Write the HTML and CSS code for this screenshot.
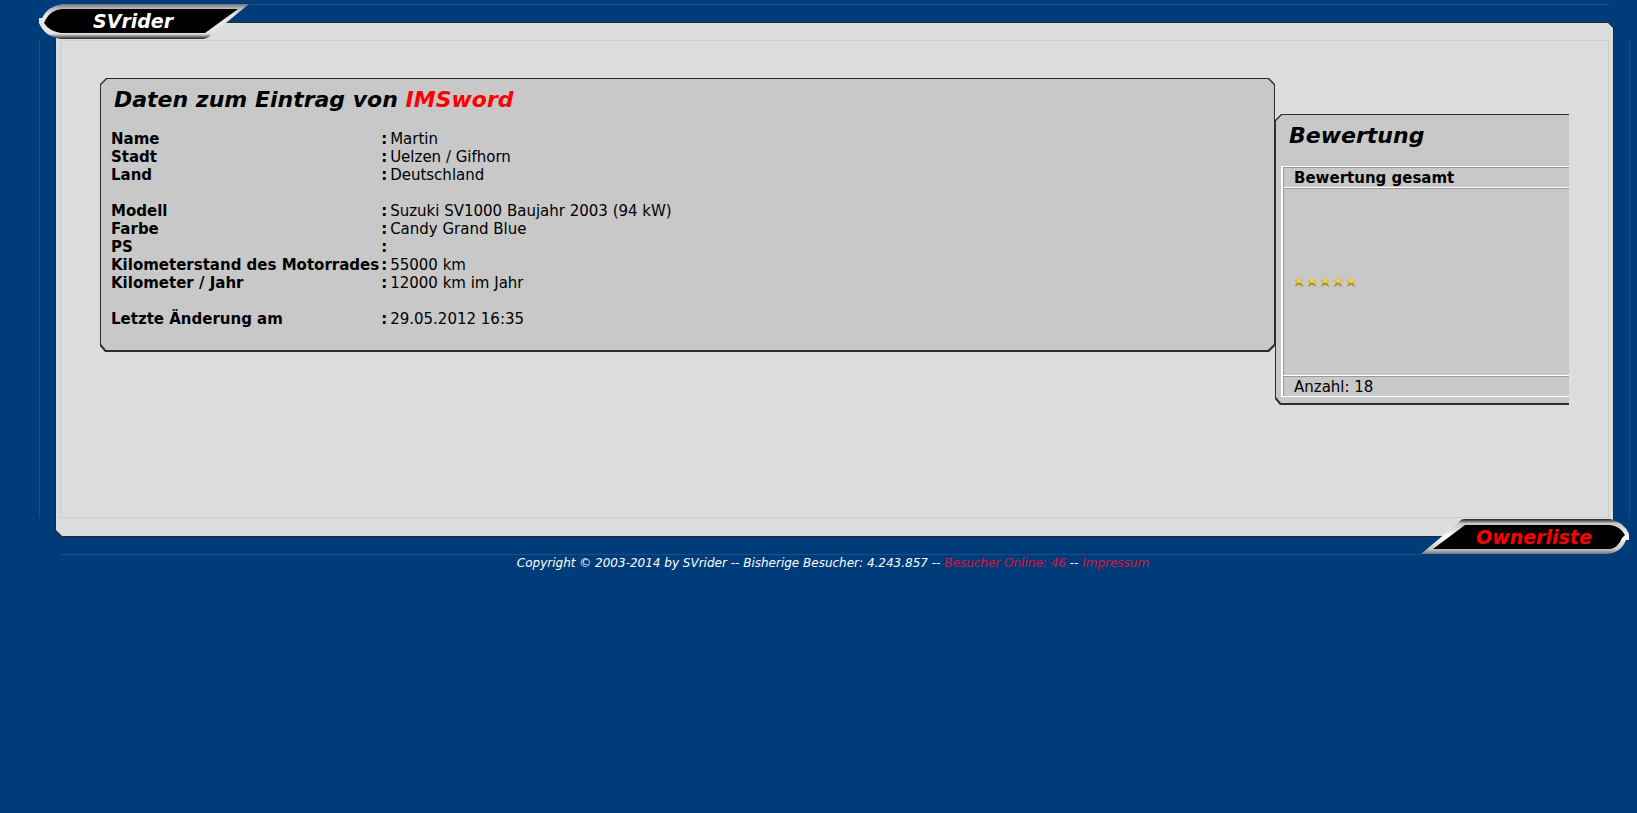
FILE: index.html
```html
<!DOCTYPE html>
<html lang="de">
<head>
<meta charset="UTF-8">
<meta name="viewport" content="width=device-width, initial-scale=1.0">
<title>SVrider - Ownerliste</title>
<link rel="stylesheet" href="styles.css">
</head>
<body>

<div class="page">
    <!-- feine Linien im blauen Rand -->
    <div class="line line-top"></div>
    <div class="line line-left"></div>
    <div class="line line-right"></div>
    <div class="line line-bottom"></div>

    <div class="frame">
        <div class="panel">
            <div class="inner">
                <div class="card entry">
                    <div class="card-body">
                        <h1>Daten zum Eintrag von <span class="user">IMSword</span></h1>
                        <table class="data">
                            <tr><th scope="row">Name</th><td class="colon">:</td><td>Martin</td></tr>
                            <tr><th scope="row">Stadt</th><td class="colon">:</td><td>Uelzen / Gifhorn</td></tr>
                            <tr><th scope="row">Land</th><td class="colon">:</td><td>Deutschland</td></tr>
                            <tr class="gap"><td colspan="3"></td></tr>
                            <tr><th scope="row">Modell</th><td class="colon">:</td><td>Suzuki SV1000 Baujahr 2003 (94 kW)</td></tr>
                            <tr><th scope="row">Farbe</th><td class="colon">:</td><td>Candy Grand Blue</td></tr>
                            <tr><th scope="row">PS</th><td class="colon">:</td><td></td></tr>
                            <tr><th scope="row">Kilometerstand des Motorrades</th><td class="colon">:</td><td>55000 km</td></tr>
                            <tr><th scope="row">Kilometer / Jahr</th><td class="colon">:</td><td>12000 km im Jahr</td></tr>
                            <tr class="gap"><td colspan="3"></td></tr>
                            <tr><th scope="row">Letzte Änderung am</th><td class="colon">:</td><td>29.05.2012 16:35</td></tr>
                        </table>
                    </div>
                </div>

                <div class="card rating">
                    <div class="card-body">
                        <h1>Bewertung</h1>
                        <table class="votes">
                            <tr><th scope="col">Bewertung gesamt</th></tr>
                            <tr>
                                <td class="stars">
                                    <svg width="64" height="12" viewBox="0 0 64 12" role="img" aria-label="5 Sterne">
                                        <defs>
                                            <g id="star">
                                                <path d="M4 0 L5.8 3.6 L9.8 4 L7 6.6 L9.4 11 L5 8.4 L0.6 11 L3 6.8 L0.2 4.4 L3.4 4 Z" fill="#dcb92c"/>
                                                <path d="M3 6.8 L0.6 11 L5 8.4 L9.4 11 L7.2 7 L5 7.2 Z" fill="#a98d33"/>
                                                <path d="M4.2 1.4 L5.4 4.4 L8.6 4.6 L5.4 6.4 L3.2 5 Z" fill="#f3da62"/>
                                            </g>
                                        </defs>
                                        <use href="#star" x="0"/>
                                        <use href="#star" x="13"/>
                                        <use href="#star" x="26"/>
                                        <use href="#star" x="39"/>
                                        <use href="#star" x="52"/>
                                    </svg>
                                </td>
                            </tr>
                            <tr><td>Anzahl: 18</td></tr>
                        </table>
                    </div>
                </div>
            </div>
        </div>
    </div>

    <div class="badge badge-top">
        <svg width="212" height="36" viewBox="0 0 212 36" aria-hidden="true">
            <defs>
                <linearGradient id="chrome" x1="0" y1="0" x2="0" y2="1">
                    <stop offset="0" stop-color="#6f747a"/>
                    <stop offset="0.12" stop-color="#b4b6b9"/>
                    <stop offset="0.3" stop-color="#e6e6e6"/>
                    <stop offset="0.85" stop-color="#e4e4e4"/>
                    <stop offset="0.92" stop-color="#8a8a8a"/>
                    <stop offset="1" stop-color="#222222"/>
                </linearGradient>
            </defs>
            <path d="M24 0 H211 L172 32 Q169 35 165 35 H23 Q7 33 1 19 V14 H4 Q10 2 24 0 Z" fill="url(#chrome)"/>
            <path d="M24 5 H200 L167 29 H23 Q11 27 6 19 L8 15 Q13 6 24 5 Z" fill="#000"/>
        </svg>
        <span class="badge-text">SVrider</span>
    </div>

    <div class="badge badge-bottom">
        <svg width="212" height="36" viewBox="0 0 212 36" aria-hidden="true">
            <defs>
                <linearGradient id="chrome2" x1="0" y1="0" x2="0" y2="1">
                    <stop offset="0" stop-color="#222222"/>
                    <stop offset="0.07" stop-color="#777777"/>
                    <stop offset="0.12" stop-color="#c4c4c4"/>
                    <stop offset="0.5" stop-color="#ffffff"/>
                    <stop offset="0.85" stop-color="#c9c9c9"/>
                    <stop offset="1" stop-color="#777c82"/>
                </linearGradient>
            </defs>
            <path d="M43 0 H189 Q203 3 208 15 V21 H205 Q200 34 186 35 H0 L38 3 Q40 0 43 0 Z" fill="url(#chrome2)"/>
            <path d="M44 6 H189 Q199 7 204 16 L201 19 Q197 29 189 30 H12 Z" fill="#000"/>
        </svg>
        <span class="badge-text">Ownerliste</span>
    </div>
</div>

<p class="footer">Copyright © 2003-2014 by SVrider -- Bisherige Besucher: 4.243.857 -- <a href="#">Besucher Online: 46</a> -- <a href="#">Impressum</a></p>

</body>
</html>
```

FILE: styles.css
```css
body {
    margin: 0;
    background-color: #003c7a;
    color: #000;
    font-family: Verdana, "DejaVu Sans", sans-serif;
    font-size: 15px;
    line-height: 18px;
}

.page {
    position: relative;
    padding: 22px 23px 18px 55px;
}

.frame {
    background-color: #252a30;
    padding: 1px;
    clip-path: polygon(0 0, calc(100% - 5px) 0, 100% 5px, 100% 100%, 6px 100%, 0 calc(100% - 6px));
}

.panel {
    background-color: #dcddde;
    padding: 17px 4px 18px;
    clip-path: polygon(0 0, calc(100% - 5px) 0, 100% 5px, 100% 100%, 6px 100%, 0 calc(100% - 6px));
}

.inner {
    display: flex;
    align-items: flex-start;
    min-height: 478px;
    box-sizing: border-box;
    padding: 37px 39px 0;
    border: 1px solid #c8d0d3;
}

.card {
    box-sizing: border-box;
    background-color: #2b2d2f;
    padding: 1px 1px 2px;
    clip-path: polygon(6px 0, calc(100% - 6px) 0, 100% 6px, 100% calc(100% - 6px), calc(100% - 6px) 100%, 5px 100%, 0 calc(100% - 6px), 0 6px);
}

.card-body {
    box-sizing: border-box;
    background-color: #c8c8c8;
    clip-path: polygon(6px 0, calc(100% - 6px) 0, 100% 6px, 100% calc(100% - 6px), calc(100% - 6px) 100%, 5px 100%, 0 calc(100% - 6px), 0 6px);
}

.entry {
    flex: 1;
}

.entry .card-body {
    padding: 8px 10px 22px;
}

/* rechts offen */
.rating,
.rating .card-body {
    clip-path: polygon(6px 0, 100% 0, 100% 100%, 5px 100%, 0 calc(100% - 6px), 0 6px);
}

.rating {
    width: 294px;
    margin-top: 36px;
    padding-right: 0;
}

.rating .card-body {
    padding: 8px 0 6px 5px;
}

h1 {
    margin: 0 0 17px 3px;
    font-size: 22px;
    line-height: 26px;
    font-style: italic;
}

.rating h1 {
    margin-left: 8px;
}

.user {
    color: #f00;
}

table {
    border-collapse: collapse;
}

.data th,
.data td {
    padding: 0;
    height: 18px;
    text-align: left;
}

.data .colon {
    padding: 0 3px 0 2px;
    font-weight: bold;
}

.votes {
    width: 100%;
    border-spacing: 0;
    border-collapse: separate;
    border-left: 2px solid #fff;
    border-bottom: 1px solid #fff;
}

.votes th,
.votes td {
    padding: 3px 0 0 11px;
    line-height: 17px;
    text-align: left;
    border-top: 1px solid #fff;
    box-shadow: inset 1px 1px 0 #999;
}

.votes .stars {
    height: 187px;
    padding-top: 0;
}

.stars svg {
    display: block;
}

.line {
    position: absolute;
    background-color: #17508a;
}

.line-top {
    top: 4px;
    left: 250px;
    right: 28px;
    height: 1px;
}

.line-left {
    top: 40px;
    bottom: 37px;
    left: 39px;
    width: 1px;
}

.line-right {
    top: 40px;
    bottom: 37px;
    right: 7px;
    width: 1px;
}

.line-bottom {
    bottom: 0;
    left: 60px;
    right: 216px;
    height: 1px;
}

.badge {
    position: absolute;
    width: 212px;
    height: 36px;
}

.badge svg {
    display: block;
}

.badge-top {
    top: 4px;
    left: 38px;
    color: #fff;
}

.badge-bottom {
    right: 4px;
    bottom: 0;
    color: #f00;
}

.badge-text {
    position: absolute;
    top: 6px;
    left: 55px;
    font-family: "DejaVu Sans", sans-serif;
    font-size: 19px;
    line-height: 22px;
    font-weight: bold;
    font-style: italic;
}

.badge-bottom .badge-text {
    top: 7px;
}

.footer {
    margin: 0 0 0 29px;
    color: #fff;
    font-size: 12px;
    line-height: 16px;
    font-style: italic;
    text-align: center;
}

.footer a {
    color: #d8123c;
    text-decoration: none;
}
```
